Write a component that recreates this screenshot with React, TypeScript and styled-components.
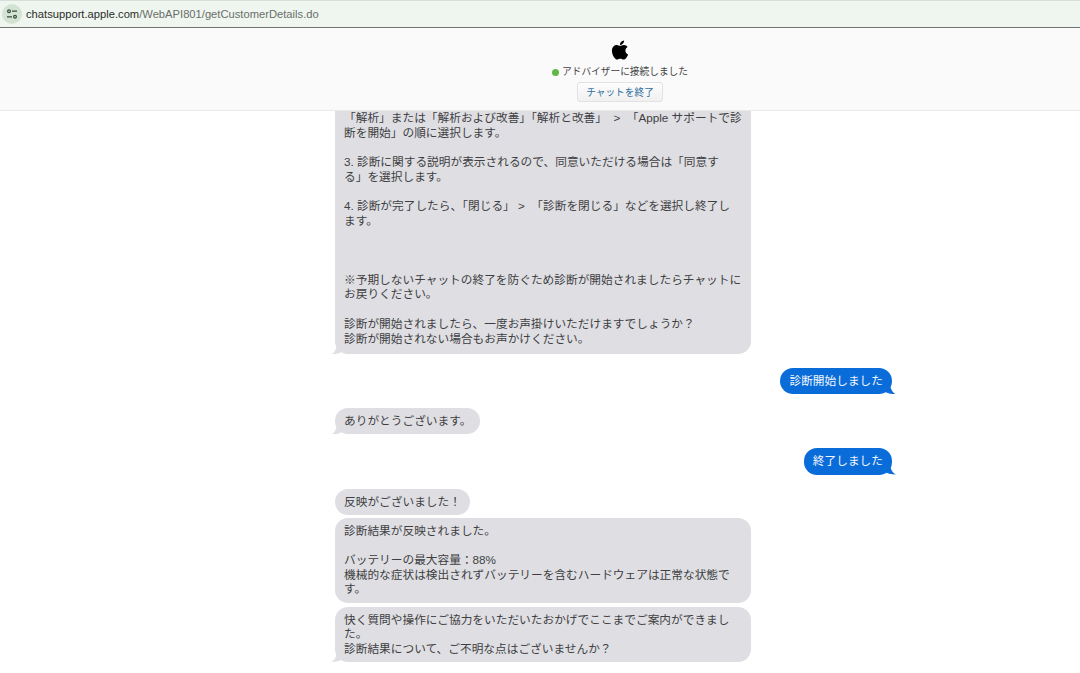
import { createGlobalStyle, styled } from "styled-components";
import { FaApple } from "react-icons/fa";

const GlobalStyle = createGlobalStyle`
  html, body {
    margin: 0;
    padding: 0;
    background: #fff;
    font-family: "Liberation Sans", "Noto Sans CJK JP", sans-serif;
  }
`;

const Page = styled.div`
  height: 673px;
  display: flex;
  flex-direction: column;
  overflow: hidden;
`;

const AddressBar = styled.div`
  height: 28px;
  flex: none;
  display: flex;
  align-items: center;
  gap: 4px;
  padding-left: 2px;
  box-sizing: border-box;
  background: #eff6ef;
  border-top: 1px solid #d8dfd8;
  border-bottom: 1px solid #6f726f;
`;

const SiteBadge = styled.span`
  width: 20px;
  height: 20px;
  border-radius: 50%;
  background: #d3e3d3;
  display: flex;
  align-items: center;
  justify-content: center;
`;

const Url = styled.span`
  font-size: 11.2px;
  color: #6a6e6a;
  white-space: nowrap;
`;

const Host = styled.span`
  color: #2a2d2a;
`;

const Header = styled.header`
  flex: none;
  height: 83px;
  box-sizing: border-box;
  padding: 11px 0 0 160px;
  background: #fafafa;
  border-bottom: 1px solid #e9e9e9;
  display: flex;
  flex-direction: column;
  align-items: center;
`;

const Status = styled.div`
  display: flex;
  align-items: center;
  gap: 3px;
  margin-top: 4px;
  font-size: 9.7px;
  line-height: 14px;
  color: #444;
`;

const Dot = styled.span`
  width: 7px;
  height: 7px;
  border-radius: 50%;
  background: #62b846;
`;

const EndButton = styled.button`
  margin-top: 3px;
  width: 86px;
  height: 20px;
  padding: 0;
  border: 1px solid #e2e2e2;
  border-radius: 3px;
  background: linear-gradient(#fdfdfd, #f0f0f0);
  color: #2f6f9f;
  font: inherit;
  font-size: 9.7px;
`;

const Log = styled.main`
  flex: 1;
  min-height: 0;
  overflow: hidden;
  display: flex;
  flex-direction: column;
  justify-content: flex-end;
  padding: 0 185px 11px 335px;
`;

const Bubble = styled.div<{ $me?: boolean; $tail?: boolean; $wide?: boolean; $gap: number; $clipped?: boolean }>`
  position: relative;
  flex: none;
  box-sizing: border-box;
  align-self: ${(p) => (p.$me ? "flex-end" : "flex-start")};
  width: ${(p) => (p.$wide ? "416px" : "auto")};
  margin-top: ${(p) => p.$gap}px;
  margin-right: ${(p) => (p.$me ? "3px" : "0")};
  padding: ${(p) => (p.$clipped ? "40px 9px 8px" : "6px 9px 5.4px")};
  border-radius: 13px;
  background: ${(p) => (p.$me ? "#0a6cd8" : "#dedee3")};
  color: ${(p) => (p.$me ? "#f4f8ff" : "#3f3f42")};
  font-size: 11.7px;
  line-height: 14.7px;
  white-space: pre;

  ${(p) =>
    p.$tail &&
    `&::after {
      content: "";
      position: absolute;
      bottom: 0;
      ${p.$me ? "right: -4px;" : "left: -4px;"}
      width: 12px;
      height: 12px;
      background: inherit;
      clip-path: ${
        p.$me
          ? "path('M0 0 H6 C6 6 8 10 12 12 C7 12 3 11 0 9 Z')"
          : "path('M12 0 H6 C6 6 4 10 0 12 C5 12 9 11 12 9 Z')"
      };
    }`}
`;

const messages = [
  {
    clipped: true,
    wide: true,
    gap: 0,
    tail: true,
    text: "「解析」または「解析および改善」「解析と改善」  >  「Apple サポートで診\n断を開始」の順に選択します。\n\n3. 診断に関する説明が表示されるので、同意いただける場合は「同意す\nる」を選択します。\n\n4. 診断が完了したら、「閉じる」 >  「診断を閉じる」などを選択し終了し\nます。\n\n\n\n※予期しないチャットの終了を防ぐため診断が開始されましたらチャットに\nお戻りください。\n\n診断が開始されましたら、一度お声掛けいただけますでしょうか\uFF1F\n診断が開始されない場合もお声かけください。",
  },
  { me: true, gap: 14, tail: true, text: "診断開始しました" },
  { gap: 14, tail: true, text: "ありがとうございます。" },
  { me: true, gap: 14, tail: true, text: "終了しました" },
  { gap: 14, text: "反映がございました\uFF01" },
  {
    wide: true,
    gap: 3,
    text: "診断結果が反映されました。\n\nバッテリーの最大容量\uFF1A88%\n機械的な症状は検出されずバッテリーを含むハードウェアは正常な状態で\nす。",
  },
  {
    wide: true,
    gap: 4,
    tail: true,
    text: "快く質問や操作にご協力をいただいたおかげでここまでご案内ができまし\nた。\n診断結果について、ご不明な点はございませんか\uFF1F",
  },
];

export default function App() {
  return (
    <Page>
      <GlobalStyle />
      <AddressBar>
        <SiteBadge>
          <svg width="12" height="12" viewBox="0 0 12 12" fill="none" stroke="#3c4a3c" strokeWidth="1.2">
            <circle cx="3" cy="3.2" r="1.4" />
            <path d="M6 3.2h5M1 8.8h5" />
            <circle cx="9" cy="8.8" r="1.4" />
          </svg>
        </SiteBadge>
        <Url>
          <Host>chatsupport.apple.com</Host>/WebAPI801/getCustomerDetails.do
        </Url>
      </AddressBar>
      <Header>
        <FaApple size={22} color="#000" />
        <Status>
          <Dot />
          アドバイザーに接続しました
        </Status>
        <EndButton>チャットを終了</EndButton>
      </Header>
      <Log>
        {messages.map((m, i) => (
          <Bubble key={i} $me={m.me} $tail={m.tail} $wide={m.wide} $gap={m.gap} $clipped={m.clipped}>
            {m.text}
          </Bubble>
        ))}
      </Log>
    </Page>
  );
}
